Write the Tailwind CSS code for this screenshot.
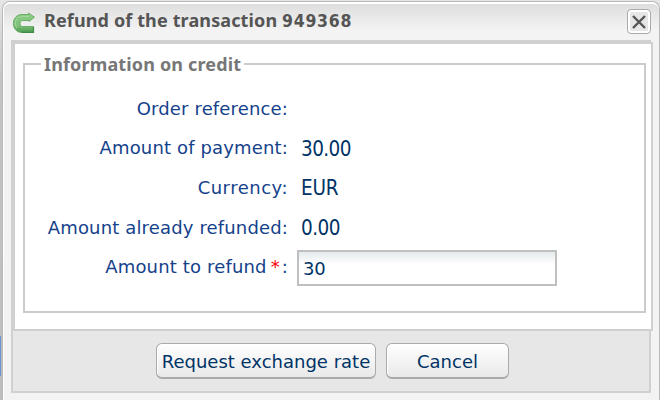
<!DOCTYPE html>
<html lang="en">
<head>
<meta charset="utf-8">
<title>Refund of the transaction</title>
<script src="https://cdn.jsdelivr.net/npm/@tailwindcss/browser@4"></script>
</head>
<body class="w-[660px] h-[400px] overflow-hidden bg-[#e3e3e3] font-['DejaVu_Sans',sans-serif]">
<div class="flex h-[400px] overflow-hidden bg-linear-to-b from-[#e6e6e6] via-[#c4c4c4] via-20% to-[#bdbdbd]">
  <div class="w-[1px] shrink-0 flex flex-col">
    <div class="h-[336px]"></div>
    <div class="h-[40px] bg-[#6b93d6]"></div>
  </div>
  <div class="w-[1px] shrink-0"></div>
  <div class="w-[658px] h-[399px] mt-[1px] shrink-0 rounded-t-[8px] border border-b-0 border-[#b9b9b9] bg-[#f3f3f3] overflow-hidden">
    <div class="h-[398px] rounded-t-[7px] border-t-2 border-l border-white bg-linear-to-b from-[#dedede] to-[#f3f3f3] to-[26px] pl-[7px]">
      <header class="h-[36px] flex items-start">
        <svg class="mt-[8px] ml-[1px] shrink-0" width="24" height="23" viewBox="0 0 24 23">
          <defs><linearGradient id="arrow" x1="0" y1="0" x2="0" y2="1"><stop offset="0" stop-color="#8fce86"/><stop offset=".65" stop-color="#7cc07a"/><stop offset="1" stop-color="#4c9950"/></linearGradient></defs>
          <path d="M16.500 1 22.500 5.200 17 9.500V8.500H10.500C7.300 8.500 7.300 14.500 10.500 14.500H21.500V20.500H10C-1.500 20.500-1.500 2.500 10 2.500H16.500Z" fill="url(#arrow)" stroke="#6aae68" stroke-width="1"/>
          <path d="M17 4.500H10.500C3 4.500 2 12 5 16" fill="none" stroke="#a5d89d" stroke-width="1"/>
          <path d="M10 20.300H21.500V15" fill="none" stroke="#3f8a45" stroke-width="1.200"/>
        </svg>
        <h1 class="ml-[8px] mt-[5px] leading-[22px] text-[18px] font-bold text-[#555] whitespace-nowrap tracking-[0.13px] font-['Noto_Sans',sans-serif]">Refund of the transaction <span class="font-['DejaVu_Sans_Condensed'] text-[17.500px] tracking-[0.7px]">949368</span></h1>
        <button class="ml-auto mr-[8px] mt-[5px] w-[24px] h-[25px] rounded-[4px] border border-[#aaa] bg-[#e6e6e6] shadow-[inset_0_0_0_2px_#fff] flex items-center justify-center" aria-label="Close">
          <svg width="14" height="14" viewBox="0 0 14 14"><path d="M1 1 13 13M13 1 1 13" stroke="#555" stroke-width="2.400"/></svg>
        </button>
      </header>
      <div class="w-[640px] h-[353px] border-2 border-[#d0d0d0] bg-[#e7e7e7]">
        <main class="w-[640px] h-[289px] border-2 border-[#d0d0d0] bg-white pl-[8px] pt-[9px]">
          <fieldset class="w-[623px] h-[260px] border-2 border-[#cbcbcb]">
            <legend class="ml-[16px] pl-[3px] w-[203px] h-[22px] leading-[22px] text-[18px] tracking-[0.15px] font-bold text-[#777] whitespace-nowrap font-['Noto_Sans',sans-serif]">Information on credit</legend>
            <div class="pt-[22px] text-[18px] tracking-[0.15px] leading-[24px] text-[#15428b] whitespace-nowrap">
              <div class="h-[39px] flex"><label class="w-[263px] shrink-0 text-right">Order reference:</label></div>
              <div class="h-[40px] flex"><label class="w-[263px] shrink-0 text-right">Amount of payment:</label><span class="ml-[13px] mt-[1px] text-[20.500px] tracking-[-0.600px] text-[#003366] font-['DejaVu_Sans_Condensed']">30.00</span></div>
              <div class="h-[40px] flex"><label class="w-[263px] shrink-0 text-right tracking-[0.500px]">Currency:</label><span class="ml-[13px] text-[20.500px] tracking-[-0.200px] text-[#003366] font-['DejaVu_Sans_Condensed']">EUR</span></div>
              <div class="h-[39px] flex"><label class="w-[263px] shrink-0 text-right">Amount already refunded:</label><span class="ml-[13px] text-[20.500px] tracking-[-0.500px] text-[#003366] font-['DejaVu_Sans_Condensed']">0.00</span></div>
              <div class="h-[39px] flex"><label class="w-[263px] shrink-0 text-right">Amount to refund<span class="text-[#f00] ml-[4px] mr-[2px]">*</span>:</label><input class="ml-[9px] -mt-[5px] w-[260px] h-[36px] border-2 border-[#c0c0c0] pl-[4px] pt-[1px] text-[18px] tracking-[-0.200px] text-[#003366] bg-linear-to-b from-[#e4eaec] to-white to-[12px]" value="30"></div>
            </div>
          </fieldset>
        </main>
        <footer class="h-[60px] pt-[12px] pl-[143px] flex gap-[10px] text-[18px] text-[#003366] whitespace-nowrap">
          <button class="w-[220px] h-[36px] rounded-[6px] border border-[#aaa] border-b-2 pt-[2px] bg-linear-to-b from-white to-[#e9e9e9] shadow-[inset_1px_1px_0_#fff]">Request exchange rate</button>
          <button class="w-[123px] h-[36px] rounded-[6px] border border-[#aaa] border-b-2 pt-[2px] bg-linear-to-b from-white to-[#e9e9e9] shadow-[inset_1px_1px_0_#fff]">Cancel</button>
        </footer>
      </div>
    </div>
  </div>
</div>
</body>
</html>
